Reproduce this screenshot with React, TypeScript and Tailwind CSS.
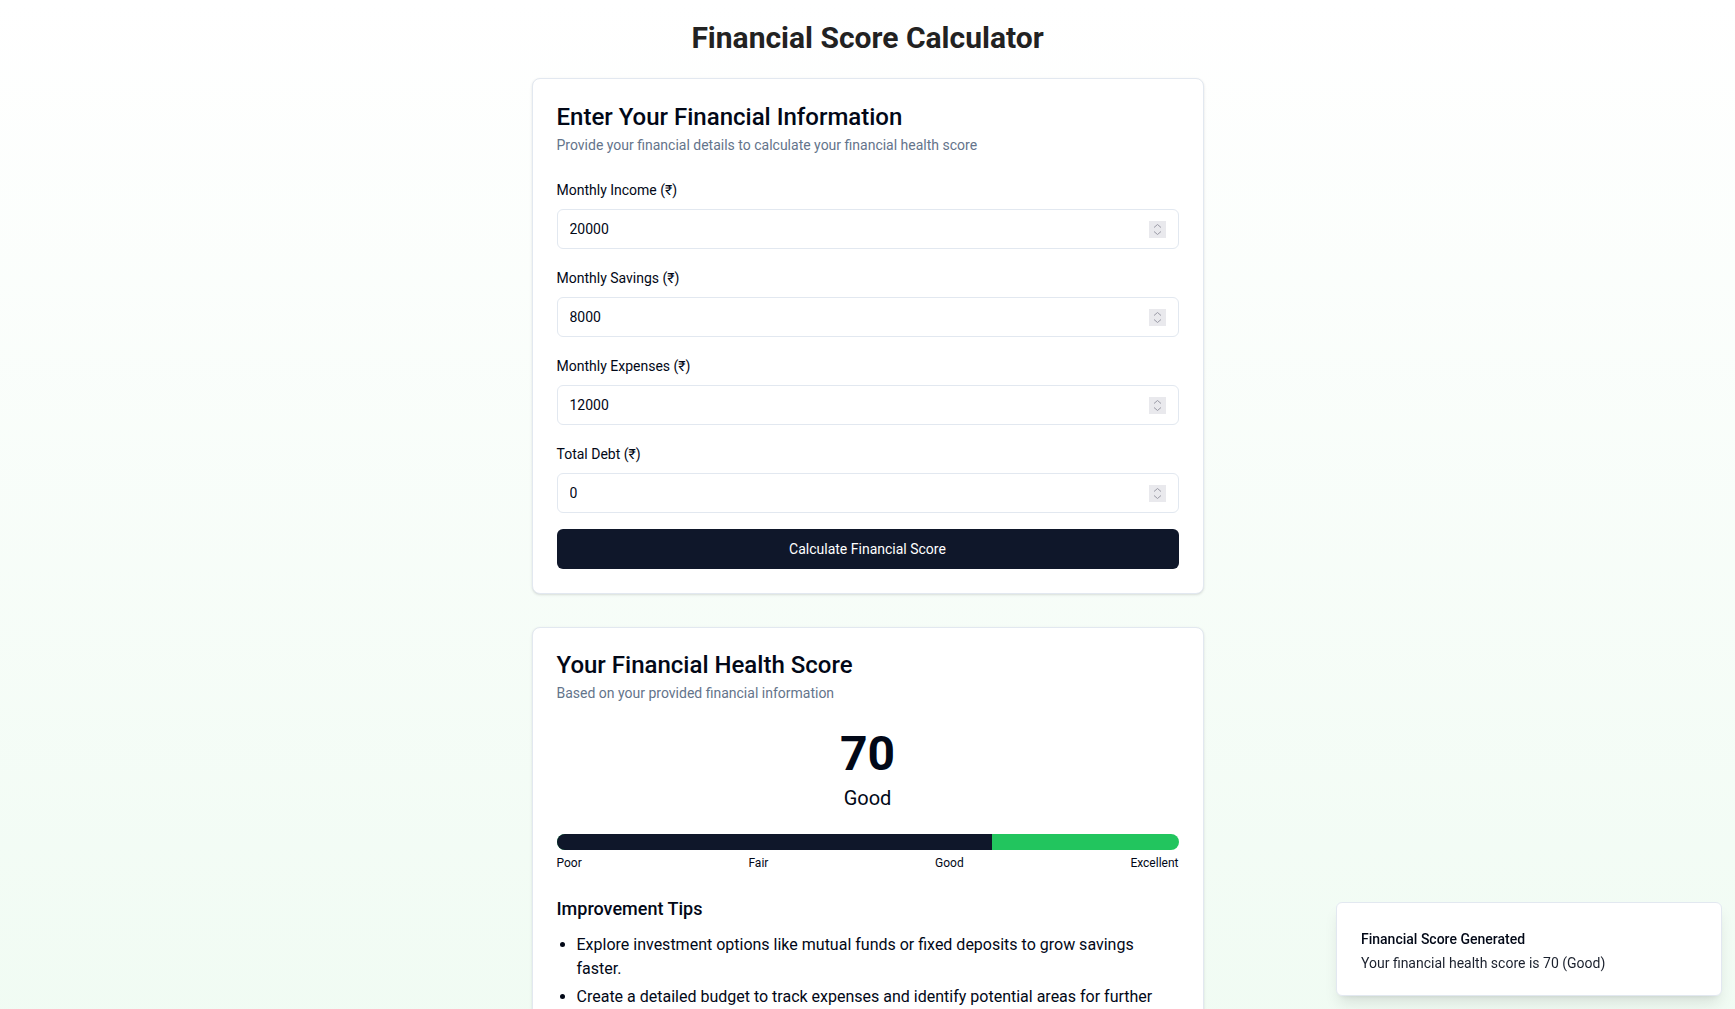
import React, { useState } from 'react'

type Field = {
  key: 'income' | 'savings' | 'expenses' | 'debt'
  label: string
}

const fields: Field[] = [
  { key: 'income', label: 'Monthly Income (₹)' },
  { key: 'savings', label: 'Monthly Savings (₹)' },
  { key: 'expenses', label: 'Monthly Expenses (₹)' },
  { key: 'debt', label: 'Total Debt (₹)' },
]

const tips = [
  'Explore investment options like mutual funds or fixed deposits to grow savings faster.',
  'Create a detailed budget to track expenses and identify potential areas for further savings.',
  'Keep an emergency fund that covers at least 6 months of your monthly expenses.',
]

function Spinner() {
  return (
    <svg width="17" height="17" viewBox="0 0 17 17" className="shrink-0">
      <rect width="17" height="17" fill="#e9e9ed" />
      <path d="M5 6.5 L8.5 3.5 L12 6.5" fill="none" stroke="#9a9aa6" strokeWidth="1" />
      <path d="M5 10.5 L8.5 13.5 L12 10.5" fill="none" stroke="#9a9aa6" strokeWidth="1" />
    </svg>
  )
}

export default function App() {
  const [values, setValues] = useState({ income: '20000', savings: '8000', expenses: '12000', debt: '0' })
  const score = 70
  const rating = 'Good'

  return (
    <div className="min-h-screen bg-gradient-to-b from-white to-[#effbf2] font-['Roboto',sans-serif] text-[#020817]">
      <div className="mx-auto max-w-2xl pt-5 pb-10">
        <h1 className="mb-[22px] text-center text-3xl font-bold text-[#222222]">Financial Score Calculator</h1>

        {/* INPUT CARD */}
        <div className="rounded-lg border border-[#e2e8f0] bg-white shadow-sm">
          <div className="flex flex-col gap-1.5 px-6 pt-[26px] pb-[22px]">
            <h2 className="text-2xl leading-none font-medium">Enter Your Financial Information</h2>
            <p className="text-sm text-[#64748b]">Provide your financial details to calculate your financial health score</p>
          </div>
          <div className="px-6 pb-6">
            <form className="flex flex-col gap-4" onSubmit={e => e.preventDefault()}>
              {fields.map(f => (
                <div key={f.key} className="flex flex-col">
                  <label className="pt-[3px] text-sm leading-[21px]">{f.label}</label>
                  <div className="mt-2 flex h-10 items-center rounded-md border border-[#e2e8f0] bg-white px-3">
                    <input
                      value={values[f.key]}
                      onChange={e => setValues(prev => ({ ...prev, [f.key]: e.target.value }))}
                      className="min-w-0 flex-1 bg-transparent text-sm outline-none"
                    />
                    <Spinner />
                  </div>
                </div>
              ))}
              <button className="h-10 rounded-md bg-[#0f172a] text-sm text-white">
                Calculate Financial Score
              </button>
            </form>
          </div>
        </div>

        {/* RESULT CARD */}
        <div className="mt-[33px] rounded-lg border border-[#e2e8f0] bg-white shadow-sm">
          <div className="flex flex-col gap-1.5 px-6 pt-[25px] pb-[23px]">
            <h2 className="text-2xl leading-none font-medium">Your Financial Health Score</h2>
            <p className="text-sm text-[#64748b]">Based on your provided financial information</p>
          </div>
          <div className="px-6 pb-6">
            <div className="flex flex-col items-center">
              <p className="pt-1 text-5xl font-bold">{score}</p>
              <p className="mt-1.5 text-xl">{rating}</p>
            </div>

            <div className="mt-[22px] h-4 w-full overflow-hidden rounded-full bg-[#22c55e]">
              <div className="h-full bg-[#0f172a]" style={{ width: `${score}%` }} />
            </div>
            <div className="mt-[5px] flex justify-between text-xs">
              <span>Poor</span>
              <span>Fair</span>
              <span>Good</span>
              <span>Excellent</span>
            </div>

            <h3 className="mt-6 mb-2.5 text-lg font-medium">Improvement Tips</h3>
            <ul className="list-disc space-y-1 pl-5 text-base">
              {tips.map((t, i) => (
                <li key={i}>{t}</li>
              ))}
            </ul>
          </div>
        </div>
      </div>

      {/* TOAST */}
      <div className="fixed right-[13px] bottom-[13px] w-[386px] rounded-md border border-[#e2e8f0] bg-white px-6 pt-[26px] pb-[22px] pr-8 shadow-lg">
        <div className="grid gap-1">
          <p className="text-sm font-medium">Financial Score Generated</p>
          <p className="text-sm opacity-90">Your financial health score is 70 (Good)</p>
        </div>
      </div>
    </div>
  )
}
